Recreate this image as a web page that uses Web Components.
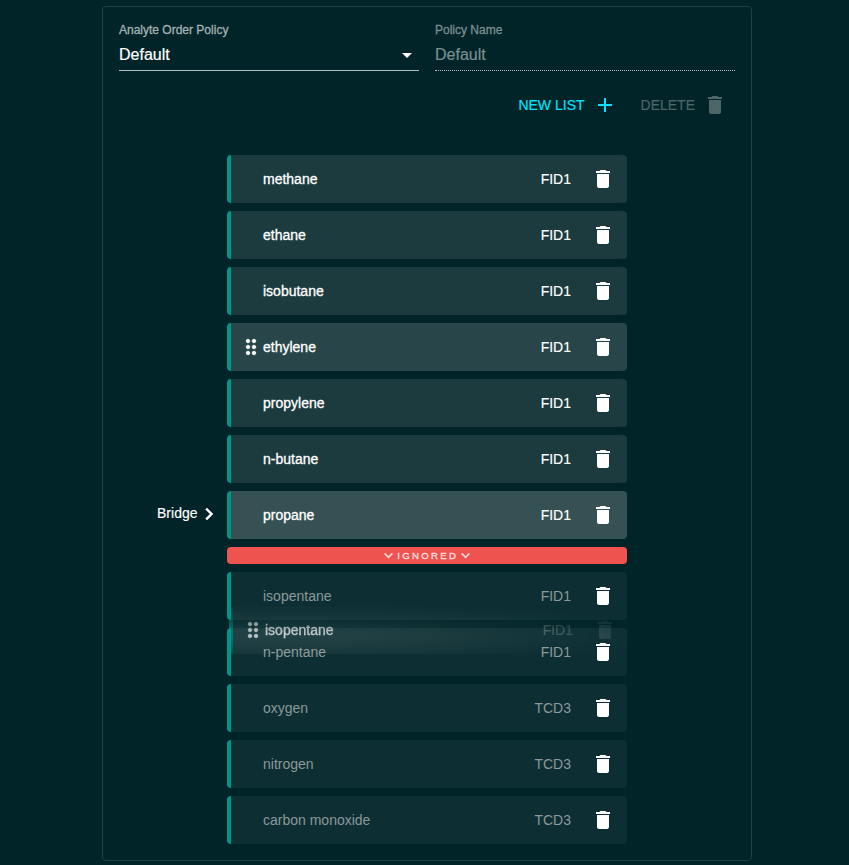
<!DOCTYPE html>
<html lang="en">
<head>
<meta charset="utf-8">
<title>Analyte Order Policy</title>
<style>
html,body{margin:0;height:865px;overflow:hidden;background:#002428;color:#fff;font-family:"Liberation Sans",Arial,sans-serif;font-size:14px}
body{display:flex;justify-content:center;align-items:flex-start;padding:6px 0 0 5px;box-sizing:border-box}
</style>
</head>
<body>
<policy-panel></policy-panel>
<script>
const define = (name, css, html) => customElements.define(name, class extends HTMLElement {
  constructor() {
    super();
    this.attachShadow({ mode: 'open' });
  }
  connectedCallback() {
    this.shadowRoot.innerHTML = `<style>${css}</style>${typeof html === 'function' ? html(this) : html}`;
  }
});

const icons = {
  trash: 'M6 19c0 1.1.9 2 2 2h8c1.1 0 2-.9 2-2V7H6v12zM19 4h-3.5l-1-1h-5l-1 1H5v2h14V4z',
  plus: 'M19 13h-6v6h-2v-6H5v-2h6V5h2v6h6v2z',
  right: 'M10 6L8.59 7.41 13.17 12l-4.58 4.59L10 18l6-6z',
  down: 'M7.41 8.59L12 13.17l4.59-4.58L18 10l-6 6-6-6z',
  caret: 'M7 10l5 5 5-5z',
  grip: 'M11 18c0 1.1-.9 2-2 2s-2-.9-2-2 .9-2 2-2 2 .9 2 2zm-2-8c-1.1 0-2 .9-2 2s.9 2 2 2 2-.9 2-2-.9-2-2-2zm0-6c-1.1 0-2 .9-2 2s.9 2 2 2 2-.9 2-2-.9-2-2-2zm6 4c1.1 0 2-.9 2-2s-.9-2-2-2-2 .9-2 2 .9 2 2 2zm0 2c-1.1 0-2 .9-2 2s.9 2 2 2 2-.9 2-2-.9-2-2-2zm0 6c-1.1 0-2 .9-2 2s.9 2 2 2 2-.9 2-2-.9-2-2-2z'
};

define('ui-icon',
  `:host{display:block;flex:none;width:24px;height:24px}svg{display:block;width:100%;height:100%;fill:currentColor;stroke:currentColor;stroke-width:var(--icon-stroke,0)}`,
  el => `<svg viewBox="0 0 24 24"><path d="${icons[el.getAttribute('name')]}"/></svg>`);

define('text-field',
  `:host{display:block;width:300px;height:48px;box-sizing:border-box;border-bottom:1px solid #b3c0c1}
  :host([disabled]){border-bottom-style:dotted}
  label{display:block;font-size:12px;line-height:14px;color:#a3b2b3;-webkit-text-stroke:.3px}
  .v{display:flex;justify-content:space-between;align-items:center;height:24px;margin-top:6px;font-size:16px;-webkit-text-stroke:.2px}
  :host([disabled]) label,:host([disabled]) .v{color:#7b8f91}`,
  el => `<label>${el.getAttribute('label')}</label><div class="v"><slot></slot>${el.hasAttribute('disabled') ? '' : '<ui-icon name="caret"></ui-icon>'}</div>`);

define('action-button',
  `:host{display:flex;align-items:center;gap:8px;color:#00e5ff;line-height:24px;-webkit-text-stroke:.15px}:host([disabled]){color:#4d6668}`,
  el => `<slot></slot><ui-icon name="${el.getAttribute('icon')}"></ui-icon>`);

define('analyte-row',
  `:host{display:flex;align-items:center;height:48px;width:400px;box-sizing:border-box;border-left:4px solid #009688;border-radius:4px;background:#1b3b3f;padding:0 12px 0 8px;line-height:20px}
  :host([tone=hover]){background:#284649}
  :host([tone=active]){background:#355153}
  :host([ignored]){background:#0d2f33}
  .grip{width:24px;height:24px;flex:none}
  .name{flex:1;-webkit-text-stroke:.3px}
  .det{margin-right:20px;-webkit-text-stroke:.15px}
  :host([ignored]) .name,:host([ignored]) .det{color:#8c9899;-webkit-text-stroke:0}
  .grip ui-icon{--icon-stroke:.25px}`,
  el => `<span class="grip">${el.hasAttribute('grip') ? '<ui-icon name="grip"></ui-icon>' : ''}</span><span class="name"><slot></slot></span><span class="det">${el.getAttribute('detector')}</span><ui-icon name="trash"></ui-icon>`);

define('ignored-bar',
  `:host{display:flex;align-items:center;justify-content:center;height:17px;border-radius:4px;background:#ef5350;color:#fbdcdb;font-size:9.6px;line-height:17px;letter-spacing:2.3px}
  ui-icon{width:17px;height:17px;margin-top:-1px;--icon-stroke:.5px}span{margin-right:-1.5px;-webkit-text-stroke:.35px}`,
  `<ui-icon name="down"></ui-icon><span>IGNORED</span><ui-icon name="down"></ui-icon>`);

define('bridge-marker',
  `:host{position:absolute;right:406px;top:347px;display:flex;align-items:center;height:24px}
  span{line-height:20px;position:relative;top:-1px;-webkit-text-stroke:.15px}ui-icon{margin-left:-.5px;--icon-stroke:.5px}`,
  `<span><slot></slot></span><ui-icon name="right"></ui-icon>`);

define('drag-preview',
  `:host{position:absolute;left:2px;top:451px;
  -webkit-mask-image:radial-gradient(ellipse 410px 36px at 62px 29px,rgba(0,0,0,.78) 0%,rgba(0,0,0,.62) 25%,rgba(0,0,0,.3) 55%,rgba(0,0,0,.1) 78%,rgba(0,0,0,.04) 92%,transparent 100%)}
  analyte-row{background:rgba(255,255,255,.12)}`,
  `<analyte-row grip detector="FID1">isopentane</analyte-row>`);

define('analyte-list',
  `:host{display:flex;flex-direction:column;gap:8px;width:400px;position:relative}`,
  () => {
    const row = ([n, d, a = '']) => `<analyte-row detector="${d}" ${a}>${n}</analyte-row>`;
    return [['methane','FID1'],['ethane','FID1'],['isobutane','FID1'],['ethylene','FID1','grip tone="hover"'],['propylene','FID1'],['n-butane','FID1'],['propane','FID1','tone="active"']].map(row).join('')
      + '<ignored-bar></ignored-bar>'
      + [['isopentane','FID1'],['n-pentane','FID1'],['oxygen','TCD3'],['nitrogen','TCD3'],['carbon monoxide','TCD3']].map(([n, d]) => row([n, d, 'ignored'])).join('')
      + '<bridge-marker>Bridge</bridge-marker><drag-preview></drag-preview>';
  });

define('policy-panel',
  `:host{display:flex;flex-direction:column;width:650px;height:855px;box-sizing:border-box;border:1px solid #1d4144;border-radius:4px;padding:16px}
  .fields{display:flex;gap:16px}
  .actions{display:flex;justify-content:flex-end;gap:24px;padding:22px 8px 38px 0}
  analyte-list{align-self:center}`,
  `<div class="fields"><text-field label="Analyte Order Policy">Default</text-field><text-field label="Policy Name" disabled>Default</text-field></div>
  <div class="actions"><action-button icon="plus">NEW LIST</action-button><action-button icon="trash" disabled>DELETE</action-button></div>
  <analyte-list></analyte-list>`);
</script>
</body>
</html>
